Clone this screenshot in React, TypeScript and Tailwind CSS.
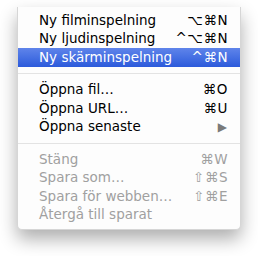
const items: (
  | { label: string; shortcut?: string; disabled?: boolean; active?: boolean; submenu?: boolean }
  | "sep"
)[] = [
  { label: "Ny filminspelning", shortcut: "⌥⌘N" },
  { label: "Ny ljudinspelning", shortcut: "^⌥⌘N" },
  { label: "Ny skärminspelning", shortcut: "^⌘N", active: true },
  "sep",
  { label: "Öppna fil…", shortcut: "⌘O" },
  { label: "Öppna URL…", shortcut: "⌘U" },
  { label: "Öppna senaste", submenu: true },
  "sep",
  { label: "Stäng", shortcut: "⌘W", disabled: true },
  { label: "Spara som…", shortcut: "⇧⌘S", disabled: true },
  { label: "Spara för webben…", shortcut: "⇧⌘E", disabled: true },
  { label: "Återgå till sparat", disabled: true },
];

export default function App() {
  return (
    <div className="w-[258px] h-[256px] bg-white pt-[7px] pl-[17px] font-['DejaVu_Sans',sans-serif]">
      <div className="w-[224px] pt-[4px] pb-[5px] bg-[#fdfdfd] rounded-b-[5px] border border-t-0 border-[#d6d6d6] shadow-[0_9px_18px_rgba(0,0,0,0.32)]">
        {items.map((item, i) => {
          if (item === "sep") {
            return (
              <div key={i} className="h-[14px] flex items-center">
                <div className="w-full h-px bg-[#e3e3e3]" />
              </div>
            );
          }
          const color = item.active
            ? "text-white"
            : item.disabled
            ? "text-[#a0a0a0]"
            : "text-black";
          return (
            <div
              key={i}
              className={`h-[18.5px] flex items-center justify-between pl-[21px] pr-[12px] text-[13.5px] leading-none ${color} ${
                item.active ? "bg-gradient-to-b from-[#5f84ea] to-[#2c5adb]" : ""
              }`}
            >
              <span>{item.label}</span>
              {item.shortcut && <span className="tracking-[0.5px]">{item.shortcut}</span>}
              {item.submenu && <span className="text-[12px] text-[#7a7a7a] pr-[1px]">▶</span>}
            </div>
          );
        })}
      </div>
    </div>
  );
}
